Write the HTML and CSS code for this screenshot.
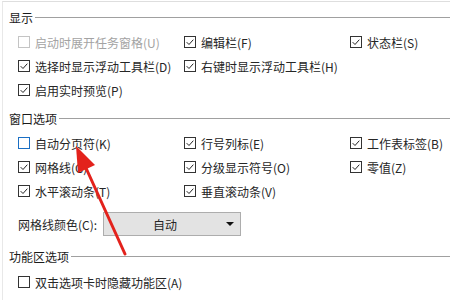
FILE: index.html
```html
<html>

<head>
	<title>Excel 选项 - 显示</title>
	<link rel="stylesheet" href="styles.css">
</head>

<body>
	<div class="panel">
		<div class="group-title first"><span>显示</span></div>
		<div class="options">
			<label class="opt disabled"><span class="box"></span>启动时展开任务窗格(U)</label>
			<label class="opt"><span class="box"><svg viewBox="0 0 12 12"><path d="M2 6.2 L4.8 9 L10 3.2"/></svg></span>编辑栏(F)</label>
			<label class="opt"><span class="box"><svg viewBox="0 0 12 12"><path d="M2 6.2 L4.8 9 L10 3.2"/></svg></span>状态栏(S)</label>
			<label class="opt"><span class="box"><svg viewBox="0 0 12 12"><path d="M2 6.2 L4.8 9 L10 3.2"/></svg></span>选择时显示浮动工具栏(D)</label>
			<label class="opt"><span class="box"><svg viewBox="0 0 12 12"><path d="M2 6.2 L4.8 9 L10 3.2"/></svg></span>右键时显示浮动工具栏(H)</label>
			<div></div>
			<label class="opt"><span class="box"><svg viewBox="0 0 12 12"><path d="M2 6.2 L4.8 9 L10 3.2"/></svg></span>启用实时预览(P)</label>
		</div>

		<div class="group-title"><span>窗口选项</span></div>
		<div class="options">
			<label class="opt"><span class="box focus"></span>自动分页符(K)</label>
			<label class="opt"><span class="box"><svg viewBox="0 0 12 12"><path d="M2 6.2 L4.8 9 L10 3.2"/></svg></span>行号列标(E)</label>
			<label class="opt"><span class="box"><svg viewBox="0 0 12 12"><path d="M2 6.2 L4.8 9 L10 3.2"/></svg></span>工作表标签(B)</label>
			<label class="opt"><span class="box"><svg viewBox="0 0 12 12"><path d="M2 6.2 L4.8 9 L10 3.2"/></svg></span>网格线(G)</label>
			<label class="opt"><span class="box"><svg viewBox="0 0 12 12"><path d="M2 6.2 L4.8 9 L10 3.2"/></svg></span>分级显示符号(O)</label>
			<label class="opt"><span class="box"><svg viewBox="0 0 12 12"><path d="M2 6.2 L4.8 9 L10 3.2"/></svg></span>零值(Z)</label>
			<label class="opt"><span class="box"><svg viewBox="0 0 12 12"><path d="M2 6.2 L4.8 9 L10 3.2"/></svg></span>水平滚动条(T)</label>
			<label class="opt"><span class="box"><svg viewBox="0 0 12 12"><path d="M2 6.2 L4.8 9 L10 3.2"/></svg></span>垂直滚动条(V)</label>
		</div>
		<div class="color-row">
			<span class="color-label">网格线颜色(C):</span>
			<div class="dropdown">
				<span>自动</span>
				<span class="caret"></span>
			</div>
		</div>

		<div class="group-title ribbon"><span>功能区选项</span></div>
		<div class="options last">
			<label class="opt"><span class="box"></span>双击选项卡时隐藏功能区(A)</label>
		</div>
	</div>

	<svg class="pointer" width="450" height="300" viewBox="0 0 450 300">
		<line x1="125" y1="254" x2="86" y2="168" />
		<polygon points="76,146 95,165 78,173" />
	</svg>
</body>

</html>
```

FILE: styles.css
```css
* { box-sizing: border-box; }
body { margin: 0; font: 12px "Noto Sans CJK SC", "Noto Sans", sans-serif; color: #262626; background: #fff; overflow: hidden; }
.panel { margin: 1px 0 0 2px; height: 299px; padding-top: 5px; border-top: 1px solid #dedede; border-left: 1px solid #e8e8e8; }

.group-title { display: flex; align-items: center; gap: 2px; height: 20px; padding-left: 6px; margin-top: 6px; color: #1a1a1a; }
.group-title.first { margin-top: 0; }
.group-title.ribbon { margin-top: 10px; }
.group-title::after { content: ""; flex: 1; border-top: 1px solid #a0a0a0; }

.options { display: grid; grid-template-columns: 166px 166px 1fr; grid-auto-rows: 24px; padding-left: 15px; margin-top: 3px; }
.options.last { margin-top: 4px; }
.opt { display: flex; align-items: center; gap: 5px; white-space: nowrap; }
.opt.disabled { color: #a3a3a3; }
.box { width: 12px; height: 12px; border: 1px solid #333; background: #fff; display: flex; }
.box svg { width: 10px; height: 10px; }
.box path { fill: none; stroke: #222; stroke-width: 1.2; }
.disabled .box { border-color: #c4c4c4; }
.box.focus { border-color: #1a6fc4; }

.color-row { display: flex; align-items: center; height: 24px; margin-top: 9px; padding-left: 15px; }
.color-label { width: 85px; }
.dropdown { display: flex; align-items: center; width: 138px; height: 24px; background: #e3e3e3; border: 1px solid #adadad; }
.dropdown span:first-child { flex: 1; text-align: center; }
.caret { width: 0; height: 0; margin-right: 6px; border-left: 4px solid transparent; border-right: 4px solid transparent; border-top: 4px solid #111; }

.pointer { position: absolute; left: 0; top: 0; pointer-events: none; }
.pointer line { stroke: #e3221c; stroke-width: 3; stroke-linecap: round; }
.pointer polygon { fill: #e3221c; }
```
